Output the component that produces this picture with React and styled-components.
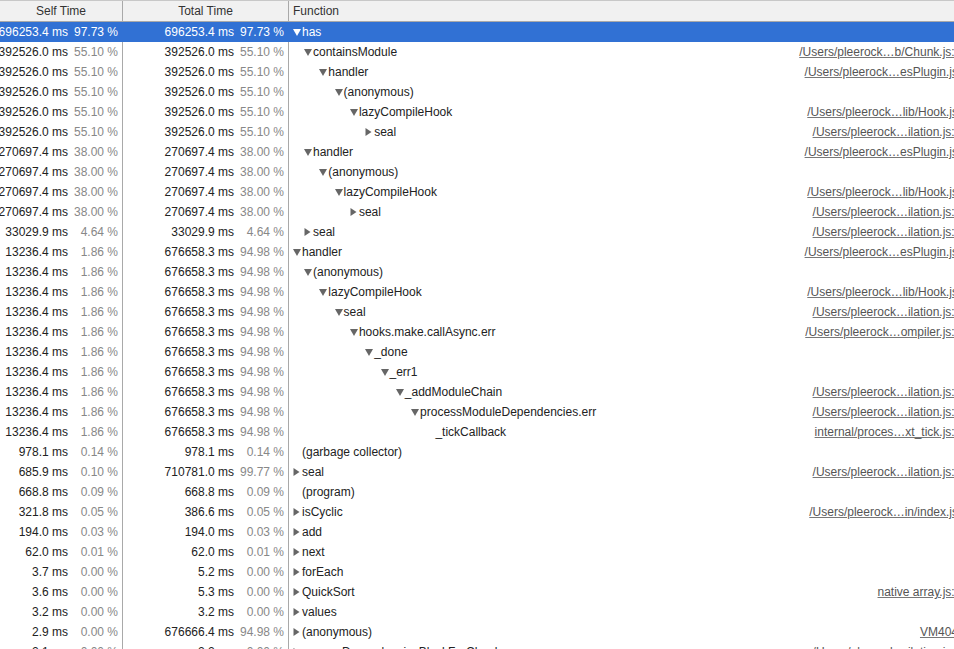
import React from "react";
import styled, { createGlobalStyle } from "styled-components";

const GlobalStyle = createGlobalStyle`
  html, body {
    margin: 0;
    padding: 0;
    background: #ffffff;
    overflow: hidden;
  }
  body {
    font-family: "Liberation Sans", Arial, sans-serif;
    font-size: 12px;
    color: #222222;
  }
`;

const SELECTED = "#3171d4";
const COLS = "123px 166px 1fr";

const Grid = styled.div`
  width: 972px;
  height: 649px;
  overflow: hidden;
  display: flex;
  flex-direction: column;
`;

const HeaderRow = styled.div`
  display: grid;
  grid-template-columns: ${COLS};
  height: 20px;
  background: #f1f1f1;
  border-top: 1px solid #c8c8c8;
  border-bottom: 1px solid #a9a9a9;
  flex: none;
  box-sizing: content-box;
`;

const HeaderCell = styled.div`
  display: flex;
  align-items: center;
  justify-content: ${(p) => (p.$left ? "flex-start" : "center")};
  padding-left: ${(p) => (p.$left ? "4px" : "0")};
  border-right: ${(p) => (p.$last ? "none" : "1px solid #a9a9a9")};
  color: #333333;
  white-space: nowrap;
`;

const Row = styled.div`
  display: grid;
  grid-template-columns: ${COLS};
  height: 20px;
  flex: none;
  background: ${(p) => (p.$selected ? SELECTED : "#ffffff")};
  color: ${(p) => (p.$selected ? "#ffffff" : "#222222")};
`;

const TimeCell = styled.div`
  display: flex;
  align-items: center;
  justify-content: flex-end;
  padding-right: 4px;
  overflow: hidden;
  white-space: nowrap;
  border-right: 1px solid ${(p) => (p.$selected ? SELECTED : "#a9a9a9")};
`;

const Ms = styled.span`
  flex: none;
`;

const Pct = styled.span`
  flex: none;
  width: 50px;
  text-align: right;
  color: ${(p) => (p.$selected ? "#ffffff" : "#888888")};
`;

const FuncCell = styled.div`
  display: flex;
  align-items: center;
  min-width: 0;
  white-space: nowrap;
  overflow: hidden;
  padding-left: ${(p) =>
    4 + (p.$depth === 0 ? 0 : 11 + 15.3 * (p.$depth - 1))}px;
  padding-right: 4px;
`;

const Toggle = styled.span`
  flex: none;
  width: 9px;
  height: 20px;
  display: flex;
  align-items: center;
  color: ${(p) => (p.$selected ? "#ffffff" : "#666666")};
`;

const Name = styled.span`
  flex: none;
`;

const SourceLink = styled.span`
  margin-left: auto;
  color: #555555;
  text-decoration: underline;
  text-decoration-color: #777777;
  text-underline-offset: 1px;
`;

const Arrow = ({ open }) =>
  open ? (
    <svg width="8" height="7" viewBox="0 0 8 7">
      <polygon points="0,0 8,0 4,7" fill="currentColor" />
    </svg>
  ) : (
    <svg width="7" height="8" viewBox="0 0 7 8">
      <polygon points="0.5,0 6.5,4 0.5,8" fill="currentColor" />
    </svg>
  );

const L = {
  chunk: "/Users/pleerock…b/Chunk.js:31",
  plugin: "/Users/pleerock…esPlugin.js:3",
  hook: "/Users/pleerock…lib/Hook.js:3",
  ilation7: "/Users/pleerock…ilation.js:77",
  compiler: "/Users/pleerock…ompiler.js:66",
  ilation6: "/Users/pleerock…ilation.js:69",
  ilation5: "/Users/pleerock…ilation.js:58",
  tick: "internal/proces…xt_tick.js:17",
  index: "/Users/pleerock…in/index.js:1",
  native: "native array.js:56",
  vm: "VM404:1",
  ilation10: "/Users/pleerock…ilation.js:10",
};

const A = ["392526.0 ms", "55.10 %"];
const B = ["270697.4 ms", "38.00 %"];
const C = ["13236.4 ms", "1.86 %"];
const C2 = ["676658.3 ms", "94.98 %"];

const rows = [
  { s: ["696253.4 ms", "97.73 %"], t: ["696253.4 ms", "97.73 %"], n: "has", d: 0, a: "open", sel: true },
  { s: A, t: A, n: "containsModule", d: 1, a: "open", l: L.chunk },
  { s: A, t: A, n: "handler", d: 2, a: "open", l: L.plugin },
  { s: A, t: A, n: "(anonymous)", d: 3, a: "open" },
  { s: A, t: A, n: "lazyCompileHook", d: 4, a: "open", l: L.hook },
  { s: A, t: A, n: "seal", d: 5, a: "closed", l: L.ilation7 },
  { s: B, t: B, n: "handler", d: 1, a: "open", l: L.plugin },
  { s: B, t: B, n: "(anonymous)", d: 2, a: "open" },
  { s: B, t: B, n: "lazyCompileHook", d: 3, a: "open", l: L.hook },
  { s: B, t: B, n: "seal", d: 4, a: "closed", l: L.ilation7 },
  { s: ["33029.9 ms", "4.64 %"], t: ["33029.9 ms", "4.64 %"], n: "seal", d: 1, a: "closed", l: L.ilation7 },
  { s: C, t: C2, n: "handler", d: 0, a: "open", l: L.plugin },
  { s: C, t: C2, n: "(anonymous)", d: 1, a: "open" },
  { s: C, t: C2, n: "lazyCompileHook", d: 2, a: "open", l: L.hook },
  { s: C, t: C2, n: "seal", d: 3, a: "open", l: L.ilation7 },
  { s: C, t: C2, n: "hooks.make.callAsync.err", d: 4, a: "open", l: L.compiler },
  { s: C, t: C2, n: "_done", d: 5, a: "open" },
  { s: C, t: C2, n: "_err1", d: 6, a: "open" },
  { s: C, t: C2, n: "_addModuleChain", d: 7, a: "open", l: L.ilation6 },
  { s: C, t: C2, n: "processModuleDependencies.err", d: 8, a: "open", l: L.ilation5 },
  { s: C, t: C2, n: "_tickCallback", d: 9, a: "none", l: L.tick },
  { s: ["978.1 ms", "0.14 %"], t: ["978.1 ms", "0.14 %"], n: "(garbage collector)", d: 0, a: "none" },
  { s: ["685.9 ms", "0.10 %"], t: ["710781.0 ms", "99.77 %"], n: "seal", d: 0, a: "closed", l: L.ilation7 },
  { s: ["668.8 ms", "0.09 %"], t: ["668.8 ms", "0.09 %"], n: "(program)", d: 0, a: "none" },
  { s: ["321.8 ms", "0.05 %"], t: ["386.6 ms", "0.05 %"], n: "isCyclic", d: 0, a: "closed", l: L.index },
  { s: ["194.0 ms", "0.03 %"], t: ["194.0 ms", "0.03 %"], n: "add", d: 0, a: "closed" },
  { s: ["62.0 ms", "0.01 %"], t: ["62.0 ms", "0.01 %"], n: "next", d: 0, a: "closed" },
  { s: ["3.7 ms", "0.00 %"], t: ["5.2 ms", "0.00 %"], n: "forEach", d: 0, a: "closed" },
  { s: ["3.6 ms", "0.00 %"], t: ["5.3 ms", "0.00 %"], n: "QuickSort", d: 0, a: "closed", l: L.native },
  { s: ["3.2 ms", "0.00 %"], t: ["3.2 ms", "0.00 %"], n: "values", d: 0, a: "closed" },
  { s: ["2.9 ms", "0.00 %"], t: ["676666.4 ms", "94.98 %"], n: "(anonymous)", d: 0, a: "closed", l: L.vm },
  { s: ["2.1 ms", "0.00 %"], t: ["2.2 ms", "0.00 %"], n: "removeDependenciesBlockForChunk", d: 0, a: "closed", l: L.ilation10 },
];

const TimeValue = ({ v, sel }) => (
  <TimeCell $selected={sel}>
    <Ms>{v[0]}</Ms>
    <Pct $selected={sel}>{v[1]}</Pct>
  </TimeCell>
);

export default function App() {
  return (
    <>
      <GlobalStyle />
      <Grid>
        <HeaderRow>
          <HeaderCell>Self Time</HeaderCell>
          <HeaderCell>Total Time</HeaderCell>
          <HeaderCell $left $last>
            Function
          </HeaderCell>
        </HeaderRow>
        {rows.map((r, i) => (
          <Row key={i} $selected={r.sel}>
            <TimeValue v={r.s} sel={r.sel} />
            <TimeValue v={r.t} sel={r.sel} />
            <FuncCell $depth={r.d}>
              <Toggle $selected={r.sel}>
                {r.a !== "none" && <Arrow open={r.a === "open"} />}
              </Toggle>
              <Name>{r.n}</Name>
              {r.l && <SourceLink>{r.l}</SourceLink>}
            </FuncCell>
          </Row>
        ))}
      </Grid>
    </>
  );
}
